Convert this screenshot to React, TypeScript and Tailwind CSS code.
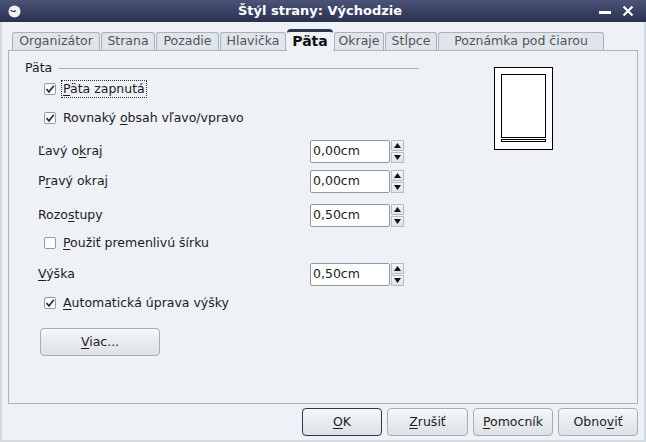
import { ReactNode } from "react";

const font = { fontFamily: '"DejaVu Sans", Verdana, sans-serif' };

function U({ children }: { children: ReactNode }) {
    return <span className="underline underline-offset-2 decoration-1">{children}</span>;
}

function CheckBox({ checked, children, focus }: { checked: boolean; children: ReactNode; focus?: boolean }) {
    return (
        <div className="flex items-center h-[20px] pl-[35px]">
            <div className="w-[12px] h-[12px] border border-[#8f9ca6] bg-white rounded-[2px] flex items-center justify-center">
                {checked && (
                    <svg width="10" height="10" viewBox="0 0 10 10">
                        <path d="M1.5 5.2 L4 7.8 L8.8 1.8" stroke="#2b3350" strokeWidth="1.8" fill="none" />
                    </svg>
                )}
            </div>
            <div className={`ml-[6px] px-[1px] leading-[16px] ${focus ? "outline outline-1 outline-dotted outline-[#333]" : ""}`}>
                {children}
            </div>
        </div>
    );
}

function SpinField({ label, value }: { label: ReactNode; value: string }) {
    return (
        <div className="flex items-center h-[23px] pl-[29px]">
            <div className="w-[272px]">{label}</div>
            <div className="w-[80px] h-[23px] bg-white border border-[#8e9aa3] rounded-[2px] flex items-center pl-[2px]">
                {value}
            </div>
            <div className="ml-[1px] w-[13px] h-[23px] flex flex-col gap-[1px]">
                <div className="flex-1 bg-gradient-to-b from-[#f4f6f8] to-[#dfe4e8] border border-[#b5bec5] flex items-center justify-center">
                    <svg width="7" height="5" viewBox="0 0 7 5"><path d="M0 5 L3.5 0 L7 5 Z" fill="#111" /></svg>
                </div>
                <div className="flex-1 bg-gradient-to-b from-[#f4f6f8] to-[#dfe4e8] border border-[#b5bec5] flex items-center justify-center">
                    <svg width="7" height="5" viewBox="0 0 7 5"><path d="M0 0 L3.5 5 L7 0 Z" fill="#111" /></svg>
                </div>
            </div>
        </div>
    );
}

function Btn({ children, focus, w }: { children: ReactNode; focus?: boolean; w: string }) {
    return (
        <div
            className={`${w} h-[28px] rounded-[4px] flex items-center justify-center bg-gradient-to-b from-[#f5f7f9] to-[#dce1e5] ${focus ? "border-[1.5px] border-[#2d3550]" : "border border-[#a3afb7]"}`}
        >
            {children}
        </div>
    );
}

const tabs = [
    { name: "Organizátor", w: "w-[88px]" },
    { name: "Strana", w: "w-[54px]" },
    { name: "Pozadie", w: "w-[63px]" },
    { name: "Hlavička", w: "w-[66px]" },
    { name: "Päta", w: "w-[46px]", active: true },
    { name: "Okraje", w: "w-[50px]" },
    { name: "Stĺpce", w: "w-[52px]" },
    { name: "Poznámka pod čiarou", w: "w-[166px]" },
];

export default function App() {
    return (
        <div className="w-[646px] h-[442px] bg-[#eef1f5] text-[12.5px] text-[#1c1c1c] flex flex-col overflow-hidden" style={font}>
            {/* title bar */}
            <div className="h-[22px] bg-gradient-to-b from-[#4b5478] to-[#2a3050] flex items-center px-[8px] text-white">
                <svg width="13" height="13" viewBox="0 0 13 13">
                    <circle cx="6.5" cy="6.5" r="6" fill="#f2f2f2" />
                    <path d="M2.5 5.5 L6 6.5 L8 5.5" stroke="#333" strokeWidth="1.2" fill="none" />
                </svg>
                <div className="flex-1 text-center font-bold text-[13px] pl-[20px]">Štýl strany: Východzie</div>
                <div className="flex items-center gap-[11px] pr-[4px]">
                    <div className="w-[12px] h-[3px] bg-white mt-[3px]" />
                    <svg width="12" height="12" viewBox="0 0 12 12">
                        <path d="M1.5 1.5 L10.5 10.5 M10.5 1.5 L1.5 10.5" stroke="#fff" strokeWidth="2.2" />
                    </svg>
                </div>
            </div>

            <div className="flex-1 border-l-[2px] border-r-[2px] border-b-[2px] border-[#d3dae0] flex flex-col px-[6px]">
                {/* tabs */}
                <div className="flex items-end h-[28px] pl-[4px] gap-[1px]">
                    {tabs.map((t) =>
                        t.active ? (
                            <div
                                key={t.name}
                                className={`${t.w} h-[22px] rounded-t-[4px] border-t-[3px] border-[#2d3550] bg-[#eef1f5] text-[#111] flex items-center justify-center font-bold text-[14px] -mb-[1px] relative z-10`}
                            >
                                {t.name}
                            </div>
                        ) : (
                            <div
                                key={t.name}
                                className={`${t.w} h-[18px] rounded-t-[3px] border border-b-0 border-[#a7b3bb] bg-[#dfe5ea] text-[#555] flex items-center justify-center`}
                            >
                                {t.name}
                            </div>
                        )
                    )}
                </div>

                {/* tab pane */}
                <div className="h-[354px] border border-[#aab6bc] flex">
                    <div className="w-[410px] flex flex-col">
                        <div className="mt-[9px] h-[16px] flex items-center pl-[16px]">
                            <span>Päta</span>
                            <div className="ml-[6px] flex-1 h-px bg-[#a8b3ba]" />
                        </div>
                        <div className="mt-[3px]">
                            <CheckBox checked focus><U>P</U>äta zapnutá</CheckBox>
                        </div>
                        <div className="mt-[9px]">
                            <CheckBox checked>Rovnaký <U>o</U>bsah vľavo/vpravo</CheckBox>
                        </div>
                        <div className="mt-[12px]">
                            <SpinField label={<>Ľavý o<U>k</U>raj</>} value="0,00cm" />
                        </div>
                        <div className="mt-[7px]">
                            <SpinField label={<>P<U>r</U>avý okraj</>} value="0,00cm" />
                        </div>
                        <div className="mt-[11px]">
                            <SpinField label={<>Rozo<U>s</U>tupy</>} value="0,50cm" />
                        </div>
                        <div className="mt-[6px]">
                            <CheckBox checked={false}><U>P</U>oužiť premenlivú šírku</CheckBox>
                        </div>
                        <div className="mt-[10px]">
                            <SpinField label={<><U>V</U>ýška</>} value="0,50cm" />
                        </div>
                        <div className="mt-[7px]">
                            <CheckBox checked><U>A</U>utomatická úprava výšky</CheckBox>
                        </div>
                        <div className="mt-[15px] pl-[31px]">
                            <Btn w="w-[120px]"><span><U>V</U>iac...</span></Btn>
                        </div>
                    </div>
                    <div className="flex-1 pl-[75px] pt-[16px]">
                        <div className="w-[59px] h-[83px] border-[1.5px] border-black bg-white p-[6px] flex flex-col">
                            <div className="h-[64px] border-[1.5px] border-black" />
                            <div className="mt-[1px] h-[3px] border-[1.2px] border-black" />
                        </div>
                    </div>
                </div>

                {/* buttons */}
                <div className="flex justify-end gap-[5px] mt-[4px]">
                    <Btn focus w="w-[80px]"><span><U>O</U>K</span></Btn>
                    <Btn w="w-[81px]"><span><U>Z</U>rušiť</span></Btn>
                    <Btn w="w-[80px]"><span><U>P</U>omocník</span></Btn>
                    <Btn w="w-[80px]"><span>Obno<U>v</U>iť</span></Btn>
                </div>
            </div>
        </div>
    );
}
